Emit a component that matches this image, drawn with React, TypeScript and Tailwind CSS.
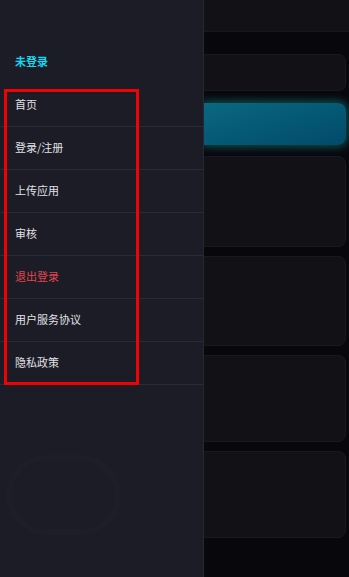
import React from 'react'

const items = [
  { label: '首页' },
  { label: '登录/注册' },
  { label: '上传应用' },
  { label: '审核' },
  { label: '退出登录', danger: true },
  { label: '用户服务协议' },
  { label: '隐私政策' },
]

export default function App() {
  return (
    <div
      className="relative w-[349px] h-[577px] overflow-hidden bg-[#08080c] flex"
      style={{ fontFamily: '"Noto Sans CJK SC", "Noto Sans", sans-serif' }}
    >
      {/* drawer */}
      <aside className="relative w-[204px] shrink-0 h-full bg-[#1b1c26] border-r border-[#262737] flex flex-col">
        <div className="h-[84px] shrink-0 pl-[15px] pt-[52px]">
          <span className="block leading-[18px] text-[11px] font-bold text-[#12d6ec]">未登录</span>
        </div>
        <ul>
          {items.map((it) => (
            <li
              key={it.label}
              className="h-[43px] flex items-center pl-[15px] pb-[2px] border-b border-[#2a2b37]"
            >
              <span className={`text-[11px] ${it.danger ? 'text-[#e0474f]' : 'text-[#e2e2e6]'}`}>
                {it.label}
              </span>
            </li>
          ))}
        </ul>
        {/* faint watermark */}
        <div className="absolute left-[6px] top-[455px] w-[115px] h-[80px] rounded-full border-[6px] border-[#1d1e28]" />
      </aside>

      {/* page behind */}
      <main className="flex-1 flex flex-col">
        <div className="h-[32px] bg-[#111116] border-b border-[#17171d]" />
        <div className="flex flex-col pt-[22px] pr-[3px] gap-[9px]">
          <div className="h-[37px] rounded-r-[7px] bg-[#111116] border border-l-0 border-[#18181f]" />
          <div className="h-[42px] mt-[3px] rounded-r-[8px] bg-gradient-to-br from-[#0a6880] to-[#024a6a] shadow-[0_0_8px_2px_rgba(20,170,170,0.45)]" />
          <div className="h-[91px] mt-[2px] rounded-r-[8px] bg-[#111116] border border-l-0 border-[#18181f]" />
          <div className="h-[90px] rounded-r-[8px] bg-[#111116] border border-l-0 border-[#18181f]" />
          <div className="h-[87px] rounded-r-[8px] bg-[#111116] border border-l-0 border-[#18181f]" />
          <div className="h-[87px] rounded-r-[8px] bg-[#111116] border border-l-0 border-[#18181f]" />
        </div>
      </main>

      {/* red annotation box */}
      <div className="absolute left-[4px] top-[89px] w-[135px] h-[296px] border-[3px] border-[#f00000]" />
    </div>
  )
}
